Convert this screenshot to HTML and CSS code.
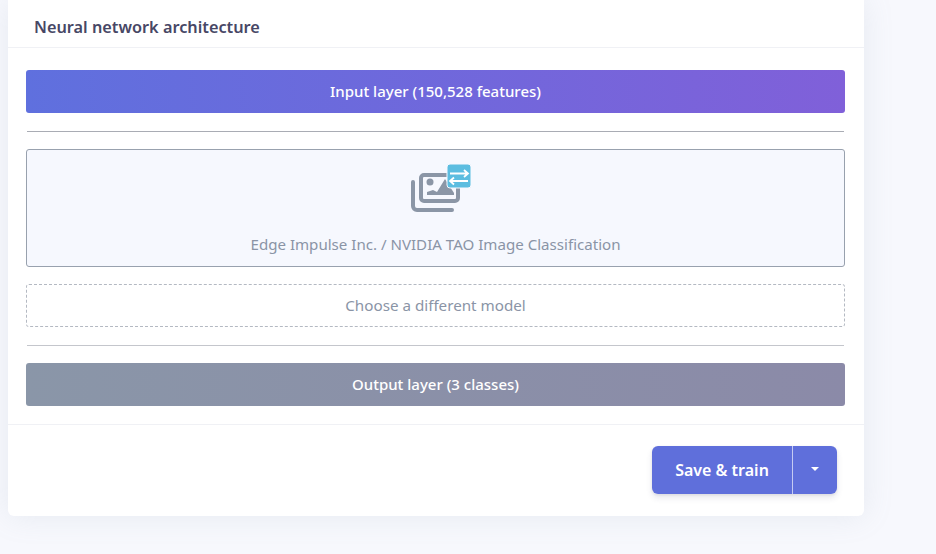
FILE: index.html
```html
<!DOCTYPE html>
<html lang="en">
<head>
<meta charset="UTF-8" />
<title>Neural network architecture</title>
<link rel="stylesheet" href="styles.css">
</head>
<body>
<div class="card">
    <div class="card-header">Neural network architecture</div>
    <div class="card-body">
        <div class="layer layer-input">Input layer (150,528 features)</div>
        <hr class="divider">
        <div class="model">
            <svg class="model-icon" width="62" height="48" viewBox="0 0 62 48">
                <path d="M3 18v24a4 4 0 0 0 4 4h35" fill="none" stroke="#8b96a6" stroke-width="4" stroke-linecap="round"/>
                <rect x="11" y="11" width="37" height="26" rx="3" fill="none" stroke="#8b96a6" stroke-width="4"/>
                <circle cx="20" cy="18" r="3.5" fill="#8b96a6"/>
                <path d="M17 31v-3l6-2 4 2 8-13 9 14v2z" fill="#8b96a6"/>
                <rect x="37" y="0" width="24" height="24" rx="3" fill="#5cbde0" stroke="#f6f8fe" stroke-width="1"/>
                <path d="M40 9.5h18M54 6l4 3.5-4 3.5M58 17H40M44 13.5l-4 3.5 4 3.5" fill="none" stroke="#fff" stroke-width="1.8"/>
            </svg>
            <div class="model-name">Edge Impulse Inc. / NVIDIA TAO Image Classification</div>
        </div>
        <div class="choose">Choose a different model</div>
        <hr class="divider divider-light">
        <div class="layer layer-output">Output layer (3 classes)</div>
    </div>
    <div class="card-footer">
        <div class="btn-group">
            <button class="btn btn-main">Save &amp; train</button>
            <button class="btn btn-caret"><span class="caret"></span></button>
        </div>
    </div>
</div>
</body>
</html>
```

FILE: styles.css
```css
body {
margin: 0;
height: 554px;
overflow: hidden;
font-family: 'Noto Sans', 'Open Sans', sans-serif;
background: #f7f8fd;
}

.card {
width: 856px;
height: 516px;
margin-left: 8px;
background: white;
border-radius: 0 0 6px 6px;
box-shadow: 0 0 30px rgba(136,152,170,0.15);
display: flex;
flex-direction: column;
}

.card-header {
height: 47px;
padding-left: 26px;
line-height: 54px;
font-size: 16.3px;
font-weight: 600;
color: #474765;
border-bottom: 1px solid #f0f1f5;
}

.card-body {
padding: 22px 19px 18px 18px;
border-bottom: 1px solid #f0f1f5;
}

.layer {
height: 43px;
line-height: 43px;
border-radius: 3px;
text-align: center;
font-size: 15px;
font-weight: 500;
color: white;
}

.layer-input {
background: linear-gradient(87deg, #5f70de, #8060d9);
}

.layer-output {
background: linear-gradient(87deg, #8a96a8, #8b8aa8);
}

.divider {
margin: 18px 1px 17px;
border: 0;
border-top: 1px solid #a9acb4;
height: 0;
}

.divider-light {
margin-top: 18px;
border-top-color: #c4c6cc;
}

.model {
height: 116px;
border: 1px solid #98a1ae;
border-radius: 3px;
background: #f6f8fe;
text-align: center;
color: #8a94a6;
font-size: 15.1px;
}

.model-icon {
display: block;
margin: 14px auto 0 383px;
}

.model-name {
margin-top: 22px;
}

.choose {
height: 41px;
line-height: 41px;
margin-top: 17px;
border: 1px dashed #b4b9c2;
border-radius: 3px;
text-align: center;
color: #8a94a6;
font-size: 15.2px;
}

.card-footer {
display: flex;
justify-content: flex-end;
padding: 21px 27px 0 0;
}

.btn-group {
display: flex;
border-radius: 6px;
box-shadow: 0 4px 6px rgba(50,50,93,0.11), 0 1px 3px rgba(0,0,0,0.08);
}

.btn {
height: 48px;
border: 0;
background: #5f6fdb;
color: white;
font-family: inherit;
font-size: 16px;
font-weight: 600;
padding: 0;
}

.btn-main {
width: 141px;
border-radius: 6px 0 0 6px;
border-right: 1px solid #c5cbf3;
}

.btn-caret {
width: 44px;
border-radius: 0 6px 6px 0;
}

.caret {
display: inline-block;
vertical-align: 5px;
border-top: 4px solid white;
border-left: 4.5px solid transparent;
border-right: 4.5px solid transparent;
}
```
